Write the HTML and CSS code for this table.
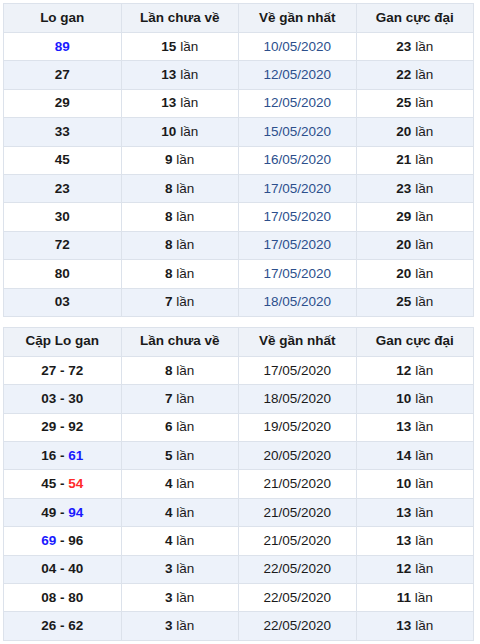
FILE: index.html
```html
<!DOCTYPE html>
<html lang="vi">
<head>
<meta charset="utf-8">
<link rel="stylesheet" href="styles.css">
</head>
<body>
<div class="wrap">
<table class="gan">
  <thead>
    <tr><th>Lo gan</th><th>Lần chưa về</th><th>Về gần nhất</th><th>Gan cực đại</th></tr>
  </thead>
  <tbody>
    <tr><td><b class="blue">89</b></td><td><b>15</b> lần</td><td class="date">10/05/2020</td><td><b>23</b> lần</td></tr>
    <tr><td><b>27</b></td><td><b>13</b> lần</td><td class="date">12/05/2020</td><td><b>22</b> lần</td></tr>
    <tr><td><b>29</b></td><td><b>13</b> lần</td><td class="date">12/05/2020</td><td><b>25</b> lần</td></tr>
    <tr><td><b>33</b></td><td><b>10</b> lần</td><td class="date">15/05/2020</td><td><b>20</b> lần</td></tr>
    <tr><td><b>45</b></td><td><b>9</b> lần</td><td class="date">16/05/2020</td><td><b>21</b> lần</td></tr>
    <tr><td><b>23</b></td><td><b>8</b> lần</td><td class="date">17/05/2020</td><td><b>23</b> lần</td></tr>
    <tr><td><b>30</b></td><td><b>8</b> lần</td><td class="date">17/05/2020</td><td><b>29</b> lần</td></tr>
    <tr><td><b>72</b></td><td><b>8</b> lần</td><td class="date">17/05/2020</td><td><b>20</b> lần</td></tr>
    <tr><td><b>80</b></td><td><b>8</b> lần</td><td class="date">17/05/2020</td><td><b>20</b> lần</td></tr>
    <tr><td><b>03</b></td><td><b>7</b> lần</td><td class="date">18/05/2020</td><td><b>25</b> lần</td></tr>
  </tbody>
</table>

<table class="gan">
  <thead>
    <tr><th>Cặp Lo gan</th><th>Lần chưa về</th><th>Về gần nhất</th><th>Gan cực đại</th></tr>
  </thead>
  <tbody>
    <tr><td><b>27 - 72</b></td><td><b>8</b> lần</td><td>17/05/2020</td><td><b>12</b> lần</td></tr>
    <tr><td><b>03 - 30</b></td><td><b>7</b> lần</td><td>18/05/2020</td><td><b>10</b> lần</td></tr>
    <tr><td><b>29 - 92</b></td><td><b>6</b> lần</td><td>19/05/2020</td><td><b>13</b> lần</td></tr>
    <tr><td><b>16 - <span class="blue">61</span></b></td><td><b>5</b> lần</td><td>20/05/2020</td><td><b>14</b> lần</td></tr>
    <tr><td><b>45 - <span class="red">54</span></b></td><td><b>4</b> lần</td><td>21/05/2020</td><td><b>10</b> lần</td></tr>
    <tr><td><b>49 - <span class="blue">94</span></b></td><td><b>4</b> lần</td><td>21/05/2020</td><td><b>13</b> lần</td></tr>
    <tr><td><b><span class="blue">69</span> - 96</b></td><td><b>4</b> lần</td><td>21/05/2020</td><td><b>13</b> lần</td></tr>
    <tr><td><b>04 - 40</b></td><td><b>3</b> lần</td><td>22/05/2020</td><td><b>12</b> lần</td></tr>
    <tr><td><b>08 - 80</b></td><td><b>3</b> lần</td><td>22/05/2020</td><td><b>11</b> lần</td></tr>
    <tr><td><b>26 - 62</b></td><td><b>3</b> lần</td><td>22/05/2020</td><td><b>13</b> lần</td></tr>
  </tbody>
</table>
</div>
</body>
</html>
```

FILE: styles.css
```css
html, body {
  margin: 0;
  padding: 0;
  background: #ffffff;
}
body {
  font-family: "Liberation Sans", Arial, sans-serif;
  font-size: 13.5px;
  color: #1a1a1a;
}
.wrap {
  padding: 3px 6px 0 3px;
  display: flex;
  flex-direction: column;
  gap: 10px;
}
.gan {
  width: 471px;
  border-collapse: collapse;
  table-layout: fixed;
}
.gan th,
.gan td {
  border: 1px solid #dce2eb;
  text-align: center;
  padding: 0;
  height: 27.4px;
  line-height: 16px;
}
.gan th {
  height: 27px;
  padding-bottom: 1px;
  background: #eef2f8;
  font-weight: bold;
  color: #1a1a1a;
}
.gan tbody tr:nth-child(even) td {
  background: #edf2fa;
}
.gan b {
  font-weight: bold;
}
.date {
  color: #2c4f8c;
}
.blue {
  color: #1a1aff;
}
.red {
  color: #ff2a2a;
}
```
